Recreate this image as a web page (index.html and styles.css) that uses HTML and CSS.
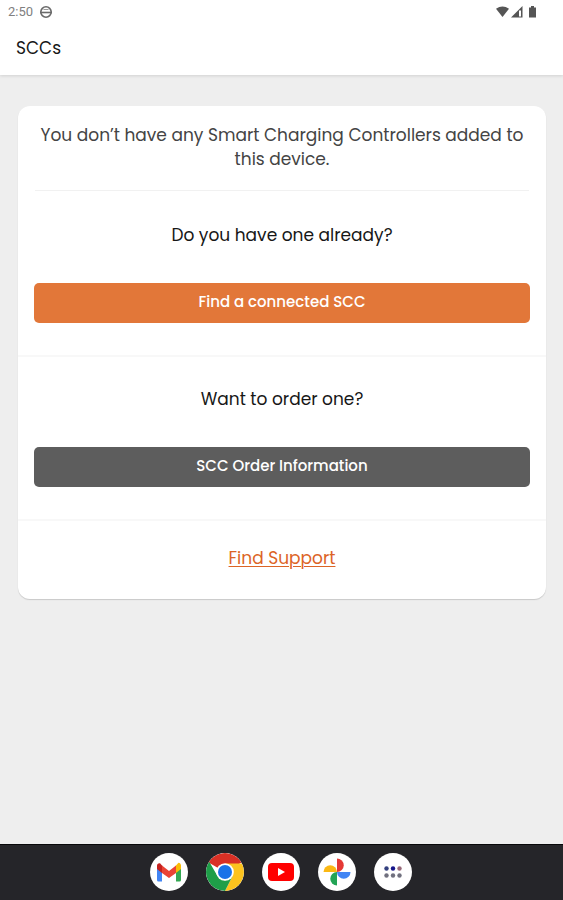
FILE: index.html
```html
<!DOCTYPE html>
<html lang="en">
<head>
<meta charset="utf-8">
<meta name="viewport" content="width=device-width, initial-scale=1">
<title>SCCs</title>
<link rel="stylesheet" href="styles.css">
</head>
<body>
<header class="top">
  <div class="status">
    <span class="clock">2:50</span>
    <svg class="status-app" width="14" height="14" viewBox="0 0 14 14" aria-hidden="true"><circle cx="7" cy="7" r="5.200" fill="none" stroke="#6a6a6a" stroke-width="1.600"/><path d="M1 7.500h12" stroke="#6a6a6a" stroke-width="1.600"/><path d="M4.500 4.500h5" stroke="#999" stroke-width="1"/></svg>
    <svg class="status-icons" width="44" height="14" viewBox="0 0 44 14" aria-hidden="true">
      <path d="M1 3.800Q7.500-1 14 3.800L7.500 12z" fill="#555"/>
      <path d="M16 12.500L27.500 1v11.500z" fill="#555"/><path d="M24 5.500h2v6h-2z" fill="#fff"/>
      <path d="M34 2.500h2V1h3v1.500h2v10h-7z" fill="#555"/>
    </svg>
  </div>
  <h1 class="title">SCCs</h1>
</header>
<main class="content">
  <div class="card">
    <p class="intro">You don’t have any Smart Charging Controllers added to this device.</p>
    <section class="section">
      <h2 class="question">Do you have one already?</h2>
      <button class="button primary" type="button">Find a connected SCC</button>
    </section>
    <section class="section">
      <h2 class="question">Want to order one?</h2>
      <button class="button secondary" type="button">SCC Order Information</button>
    </section>
    <div class="support"><a href="#support">Find Support</a></div>
  </div>
</main>
<nav class="dock" aria-label="Apps">
  <a class="app" href="#mail" aria-label="Gmail"><svg viewBox="0 0 38 38">
    <path d="M7 12v15q0 1.500 1.500 1.500H12V16z" fill="#4285f4"/>
    <path d="M26 16v12.500h3.500q1.500 0 1.500-1.500V12z" fill="#34a853"/>
    <path d="M26 12.500V20l5-4V13q0-3-2.500-3.200z" fill="#fbbc04"/>
    <path d="M12 20v-7.500l7 5.500 7-5.500V20l-7 5z" fill="#ea4335"/>
    <path d="M7 13v3l5 4v-7.500l-2-2.200Q7 10 7 13z" fill="#c5221f"/>
  </svg></a>
  <a class="app" href="#browser" aria-label="Chrome"><svg viewBox="0 0 38 38">
    <path d="M19 19L2.550 9.500A19 19 0 0 1 35.450 9.500z" fill="#d93025"/>
    <path d="M19 10.500H35.950A19 19 0 0 1 19 38L26.400 23.300z" fill="#fcc31e"/>
    <path d="M3.100 8.600A19 19 0 0 0 19 38L26.400 23.300 19 27.500 11.600 23.300z" fill="#1e9e48"/>
    <circle cx="19" cy="19" r="8.800" fill="#fff"/><circle cx="19" cy="19" r="7" fill="#1a73e8"/>
  </svg></a>
  <a class="app" href="#video" aria-label="YouTube"><svg viewBox="0 0 38 38"><rect x="6" y="10" width="26" height="18" rx="4" fill="#f00"/><path d="M16 15l7 4-7 4z" fill="#fff"/></svg></a>
  <a class="app" href="#photos" aria-label="Photos"><svg viewBox="0 0 38 38">
    <path d="M19 5.500a6.750 6.750 0 0 1 0 13.500z" fill="#e53935"/>
    <path d="M32.500 19a6.750 6.750 0 0 1-13.500 0z" fill="#4285f4"/>
    <path d="M19 32.500a6.750 6.750 0 0 1 0-13.500z" fill="#23a455"/>
    <path d="M5.500 19a6.750 6.750 0 0 1 13.500 0z" fill="#fbb813"/>
  </svg></a>
  <a class="app" href="#all" aria-label="All apps"><svg viewBox="0 0 38 38">
    <g fill="#34407f"><circle cx="12.500" cy="15.500" r="2.200"/><circle cx="19" cy="15.500" r="2.200" fill="#15158a"/><circle cx="25.500" cy="15.500" r="2.200" fill="#986979"/></g>
    <g fill="#70707e"><circle cx="12.500" cy="22.500" r="2.200"/><circle cx="19" cy="22.500" r="2.200"/><circle cx="25.500" cy="22.500" r="2.200"/></g>
  </svg></a>
</nav>
</body>
</html>
```
FILE: styles.css
```css
* {
  box-sizing: border-box;
}

body {
  margin: 0;
  min-height: 100vh;
  display: flex;
  flex-direction: column;
  background: #eeeeee;
  color: #171717;
  font-family: Poppins, Inter, sans-serif;
  font-size: 17px;
  line-height: 24px;
}

h1,
h2,
p {
  margin: 0;
  font-size: inherit;
  font-weight: 400;
}

.top {
  background: #ffffff;
  box-shadow: 0 1px 3px rgba(0, 0, 0, 0.12);
}

.status {
  display: flex;
  align-items: center;
  gap: 6px;
  height: 24px;
  padding: 0 24px 0 8px;
}

.clock {
  color: #808080;
  font-family: Roboto, sans-serif;
  font-size: 13px;
}

.status-icons {
  margin-left: auto;
}

.title {
  padding: 12px 16px 15px;
}

.content {
  flex: 1;
  padding: 31px 17px 31px 18px;
}

.card {
  background: #ffffff;
  border-radius: 12px;
  box-shadow: 0 1px 1px rgba(0, 0, 0, 0.16);
  text-align: center;
}

.intro {
  margin: 0 17px 2px;
  padding: 17px 0 19px;
  border-bottom: 1px solid #f1f1f1;
  color: #444444;
}

.section {
  display: flex;
  flex-direction: column;
  gap: 36px;
  padding: 30px 16px 32px;
  border-bottom: 2px solid #f8f8f8;
}

.button {
  height: 40px;
  padding: 0 16px 2px;
  border: 0;
  border-radius: 5px;
  color: #ffffff;
  font: inherit;
  font-size: 15px;
  font-weight: 500;
}

.primary {
  background: #e27739;
}

.secondary {
  background: #5d5d5d;
}

.support {
  padding: 25px 16px 29px;
}

.support a {
  color: #dc6426;
  text-decoration-thickness: 1px;
  text-underline-offset: 2px;
}

.dock {
  display: flex;
  justify-content: center;
  gap: 18px;
  padding: 8px 10px 9px 8px;
  background: #252529;
  border-top: 1px solid #08080a;
}

.app {
  width: 38px;
  height: 38px;
  border-radius: 50%;
  background: #ffffff;
  overflow: hidden;
}

.app svg {
  display: block;
}
```
